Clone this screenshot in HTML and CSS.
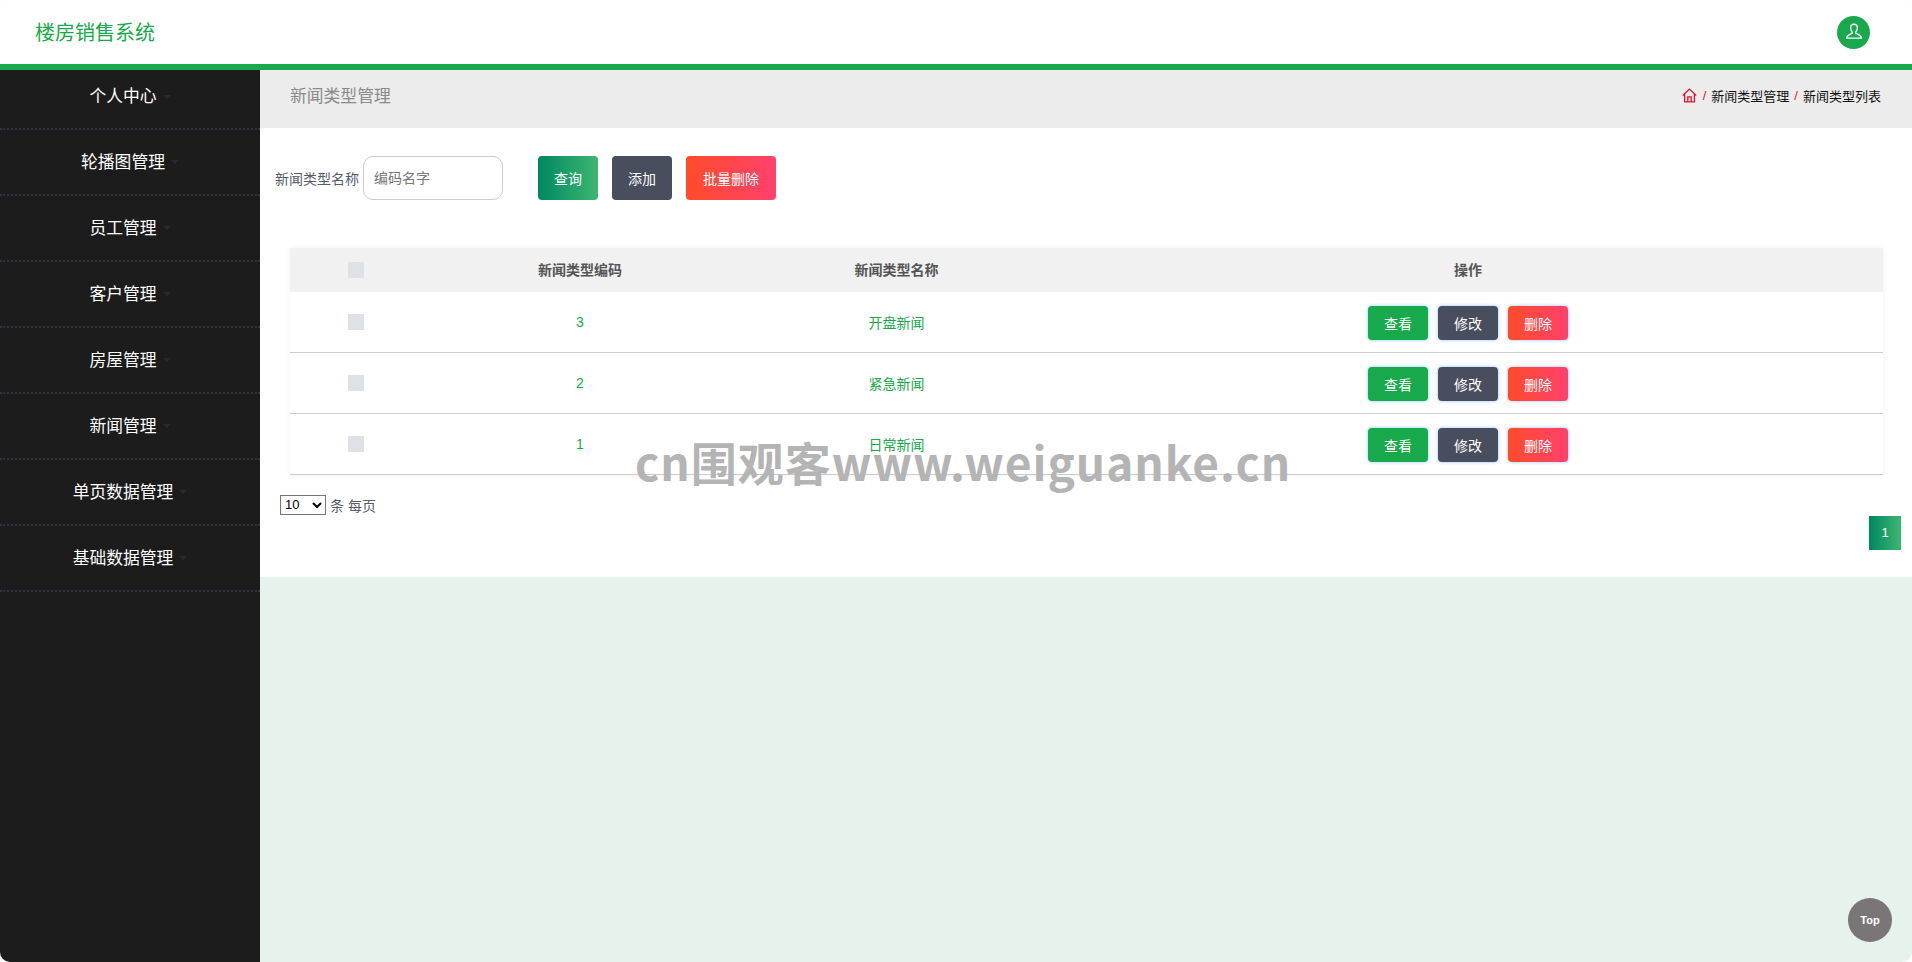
FILE: index.html
```html
<!DOCTYPE html>
<html lang="zh-CN">
<head>
  <meta charset="UTF-8" />
  <meta name="viewport" content="width=device-width, initial-scale=1.0"/>
  <title>楼房销售系统</title>
  <link rel="stylesheet" href="styles.css">
</head>
<body>
  <div class="app">
    <header class="topbar">
      <div class="brand">楼房销售系统</div>
      <div class="avatar">
        <svg viewBox="0 0 20 20" width="20" height="20" fill="none" stroke="#fff" stroke-width="1.4" stroke-linejoin="round">
          <path d="M10 2.2c-2.2 0-3.400 1.600-3.400 3.600 0 1.600.6 3 1.500 4 .3.4.3 1.100 0 1.500-.6.7-5 1.600-5.600 4.800h15c-.6-3.200-5-4.100-5.600-4.800-.3-.4-.3-1.100 0-1.500.9-1 1.500-2.400 1.500-4 0-2-1.200-3.600-3.400-3.600z"/>
        </svg>
      </div>
    </header>

    <div class="layout">
      <nav class="sidebar">
        <a class="side-item">个人中心<i class="caret"></i></a>
        <a class="side-item">轮播图管理<i class="caret"></i></a>
        <a class="side-item">员工管理<i class="caret"></i></a>
        <a class="side-item">客户管理<i class="caret"></i></a>
        <a class="side-item">房屋管理<i class="caret"></i></a>
        <a class="side-item">新闻管理<i class="caret"></i></a>
        <a class="side-item">单页数据管理<i class="caret"></i></a>
        <a class="side-item">基础数据管理<i class="caret"></i></a>
      </nav>

      <main class="content">
        <div class="crumbbar">
          <h3 class="page-title">新闻类型管理</h3>
          <div class="crumbs">
            <svg class="home" viewBox="0 0 16 16" width="15" height="15" fill="none" stroke="#e8112d" stroke-width="1.4">
              <path d="M.8 8 8 1.200 15.200 8M2.800 6.600V14.800h10.400V6.600M6.200 14.800V9.400h3.600v5.400"/>
            </svg>
            <span class="sep">/</span><span>新闻类型管理</span><span class="sep">/</span><span>新闻类型列表</span>
          </div>
        </div>

        <section class="panel">
          <div class="search">
            <label class="search-label">新闻类型名称</label>
            <input class="search-input" type="text" placeholder="编码名字">
            <button class="btn btn-query">查询</button>
            <button class="btn btn-add btn-dark">添加</button>
            <button class="btn btn-del btn-red">批量删除</button>
          </div>

          <table class="grid">
            <thead>
              <tr>
                <th class="col-check"><span class="check"></span></th>
                <th class="col-code">新闻类型编码</th>
                <th class="col-name">新闻类型名称</th>
                <th class="col-ops">操作</th>
              </tr>
            </thead>
            <tbody>
              <tr>
                <td><span class="check"></span></td>
                <td>3</td>
                <td>开盘新闻</td>
                <td class="ops"><button class="btn-op op-green">查看</button><button class="btn-op btn-dark">修改</button><button class="btn-op btn-red">删除</button></td>
              </tr>
              <tr>
                <td><span class="check"></span></td>
                <td>2</td>
                <td>紧急新闻</td>
                <td class="ops"><button class="btn-op op-green">查看</button><button class="btn-op btn-dark">修改</button><button class="btn-op btn-red">删除</button></td>
              </tr>
              <tr>
                <td><span class="check"></span></td>
                <td>1</td>
                <td>日常新闻</td>
                <td class="ops"><button class="btn-op op-green">查看</button><button class="btn-op btn-dark">修改</button><button class="btn-op btn-red">删除</button></td>
              </tr>
            </tbody>
          </table>

          <div class="page-size">
            <select class="size-select"><option>10</option><option>20</option></select>
            <span>条 每页</span>
          </div>
          <div class="pager"><a class="page-num">1</a></div>
        </section>
      </main>
    </div>

    <div class="watermark">cn围观客www.weiguanke.cn</div>
    <a class="to-top">Top</a>
  </div>
</body>
</html>
```

FILE: styles.css
```css
html, body { margin: 0; height: 100%; background: #fff; }
body { font-family: "Liberation Sans", "Noto Sans CJK SC", sans-serif; font-size: 14px; overflow: hidden; }
.app { position: relative; height: 962px; border-radius: 10px; overflow: hidden; display: flex; flex-direction: column; background: #e6f2ec; }

.topbar { height: 64px; flex: none; background: #fff; border-bottom: 6px solid #17a94b; display: flex; align-items: center; justify-content: space-between; padding: 0 42px 0 35px; }
.brand { font-size: 20px; color: #17a94b; margin-top: -2px; }
.avatar { width: 33px; height: 33px; border-radius: 50%; background: #17a94b; display: flex; align-items: center; justify-content: center; }

.layout { flex: 1; display: flex; min-height: 0; }
.sidebar { width: 260px; flex: none; background: #1c1c1c; overflow: hidden; }
.side-item { box-sizing: border-box; display: flex; align-items: center; justify-content: center; height: 66px; padding-bottom: 3px; border-bottom: 2px dotted #2e3346; color: #fff; font-size: 16.8px; }
.side-item:first-child { height: 60px; padding-bottom: 8px; }
.caret { width: 0; height: 0; margin-left: 6px; margin-top: 3px; border: 4px solid transparent; border-top-color: #2a2a2a; border-bottom: 0; }

.content { flex: 1; min-width: 0; }
.crumbbar { height: 58px; box-sizing: border-box; padding: 0 31px 8px 30px; background: #ececec; display: flex; align-items: center; justify-content: space-between; }
.page-title { margin: 0; font-size: 16.8px; font-weight: normal; color: #8a8a8a; }
.crumbs { display: flex; align-items: center; font-size: 13px; color: #111; }
.home { margin-right: 1px; }
.sep { color: #e8112d; margin: 0 5px; }

.panel { background: #fff; height: 449px; padding: 28px 11px 0 15px; box-sizing: border-box; }
.search { display: flex; align-items: center; height: 44px; }
.search-label { color: #555d6b; margin-right: 4px; }
.search-input { width: 140px; height: 44px; box-sizing: border-box; border: 1px solid #ccc; border-radius: 10px; padding: 0 10px; font: inherit; font-size: 14px; margin-right: 35px; }
.search-input::placeholder { color: #777; }
.btn { height: 44px; border: 0; border-radius: 4px; padding: 0; color: #fff; font: inherit; margin-right: 14px; width: 60px; }
.btn-del { width: 90px; }
.btn-query { background: linear-gradient(to right, #008761, #3eb672); }
.btn-dark { background: #484e5e; color: #fff; }
.btn-red { background: linear-gradient(to right, #ff4b2b, #ff416c); color: #fff; }

.grid { width: 1593px; margin: 48px 0 0 15px; border-collapse: collapse; table-layout: fixed; box-shadow: 0 0 6px rgba(0,0,0,0.06); }
.grid th { height: 44px; padding: 0 0 2px; box-sizing: border-box; background: #f1f1f1; color: #555; font-size: 14px; }
.grid th.col-check { padding: 0; }
.grid th.col-ops { padding-right: 2px; }
.grid td { height: 61px; box-sizing: border-box; padding: 0; text-align: center; color: #17a94b; border-bottom: 1px solid #ccc; }
.grid tbody tr:first-child td { height: 60px; }
.col-check { width: 132px; }
.col-code { width: 316px; }
.col-name { width: 317px; }
.check { display: block; width: 16px; height: 16px; margin: 0 auto; background: #dee2e6; }
.grid td.ops { font-size: 0; padding: 2px 2px 0 0; }
.btn-op { width: 60px; height: 34px; margin: 0 5px; border: 0; border-radius: 4px; font: inherit; font-size: 14px; padding: 0; color: #fff; box-shadow: 0 0 3px 1px #bcdcff; }
.op-green { background: #17a94b; }

.page-size { display: flex; align-items: center; margin: 20px 0 0 5px; color: #555d6b; height: 20px; }
.size-select { width: 46px; height: 20px; margin-right: 4px; font-family: inherit; font-size: 13px; background: #fff; }
.pager { display: flex; justify-content: flex-end; margin-top: 1px; }
.page-num { width: 32px; height: 34px; display: flex; align-items: center; justify-content: center; color: #fff; font-size: 13px; background: linear-gradient(to right, #008761, #3eb672); }

.watermark { position: absolute; left: 635px; top: 433px; font-family: "Noto Sans CJK SC", sans-serif; font-weight: 700; font-size: 46px; letter-spacing: 1px; line-height: 56px; color: #b4b4b4; white-space: nowrap; }
.to-top { position: absolute; left: 1848px; top: 898px; width: 44px; height: 44px; border-radius: 50%; background: #7a7577; color: #fff; font-size: 11px; font-weight: bold; display: flex; align-items: center; justify-content: center; }
```
